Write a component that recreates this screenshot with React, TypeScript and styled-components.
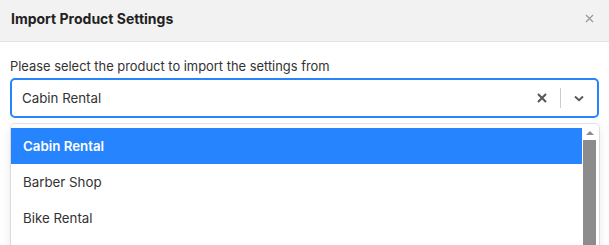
import styled, { createGlobalStyle } from 'styled-components';

const GlobalStyle = createGlobalStyle`
  html, body {
    margin: 0;
    padding: 0;
    background: #fff;
    font-family: Inter, 'Noto Sans', sans-serif;
    color: #333;
  }
`;

const products = ['Cabin Rental', 'Barber Shop', 'Bike Rental'];

const App = () => {
  const selected = 'Cabin Rental';

  return (
    <Modal_wrapper>
      <GlobalStyle />
      <Header>
        <Title>Import Product Settings</Title>
        <CloseButton aria-label='Close'>
          <svg width='9' height='9' viewBox='0 0 9 9'>
            <path d='M1 1L8 8M8 1L1 8' stroke='#9a9a9a' strokeWidth='1.3' />
          </svg>
        </CloseButton>
      </Header>
      <Body>
        <Label>Please select the product to import the settings from</Label>
        <Control>
          <Value>{selected}</Value>
          <Indicators>
            <IconButton>
              <svg width='12' height='12' viewBox='0 0 12 12'>
                <path d='M2 2L10 10M10 2L2 10' stroke='#555' strokeWidth='2' />
              </svg>
            </IconButton>
            <Separator />
            <IconButton>
              <svg width='14' height='14' viewBox='0 0 14 14'>
                <path d='M3 5.5L7 9.2L11 5.5' fill='none' stroke='#555' strokeWidth='1.8' />
              </svg>
            </IconButton>
          </Indicators>
        </Control>
        <Menu>
          <MenuList>
            {products.map((item) => (
              <Option key={item} $active={item === selected}>
                {item}
              </Option>
            ))}
          </MenuList>
          <Scrollbar>
            <ScrollArrow />
            <ScrollThumb />
          </Scrollbar>
        </Menu>
      </Body>
    </Modal_wrapper>
  );
};

const Modal_wrapper = styled.div`
  width: 609px;
  height: 245px;
  overflow: hidden;
`;

const Header = styled.div`
  height: 42px;
  box-sizing: border-box;
  background: #f2f2f2;
  border-bottom: 1px solid #e2e2e2;
  display: flex;
  align-items: center;
  justify-content: space-between;
  padding: 0 15px 0 11px;
`;

const Title = styled.h3`
  margin: 0;
  font-size: 14px;
  font-weight: 700;
  color: #222;
  padding-bottom: 4px;
`;

const CloseButton = styled.span`
  display: flex;
  padding-bottom: 4px;
`;

const Body = styled.div`
  padding: 17px 10px 0;
`;

const Label = styled.div`
  font-size: 12.9px;
  line-height: 16px;
  color: #333;
  margin-bottom: 3px;
`;

const Control = styled.div`
  height: 40px;
  box-sizing: border-box;
  border: 2px solid #2684ff;
  border-radius: 5px;
  display: flex;
  align-items: center;
  padding-left: 10px;
`;

const Value = styled.div`
  flex: 1;
  font-size: 13.3px;
  color: #333;
`;

const Indicators = styled.div`
  display: flex;
  align-items: center;
  height: 100%;
`;

const IconButton = styled.div`
  width: 36px;
  display: flex;
  justify-content: center;
  align-items: center;
`;

const Separator = styled.span`
  width: 1px;
  height: 20px;
  background: #ccc;
`;

const Menu = styled.div`
  margin-top: 6px;
  margin-left: 1px;
  height: 140px;
  border-radius: 4px;
  box-shadow: 0 0 0 1px rgba(0, 0, 0, 0.1), 0 4px 11px rgba(0, 0, 0, 0.1);
  display: flex;
  padding: 4px 2px 0 0;
  box-sizing: border-box;
  overflow: hidden;
`;

const MenuList = styled.div`
  flex: 1;
`;

const Option = styled.div<{ $active?: boolean }>`
  height: 36px;
  display: flex;
  align-items: center;
  padding: 0 12px;
  font-size: 13.3px;
  background: ${(p) => (p.$active ? '#2684ff' : '#fff')};
  color: ${(p) => (p.$active ? '#fff' : '#333')};
  font-weight: ${(p) => (p.$active ? 600 : 400)};
`;

const Scrollbar = styled.div`
  width: 15px;
  display: flex;
  flex-direction: column;
  align-items: center;
`;

const ScrollArrow = styled.div`
  width: 0;
  height: 0;
  margin: 3px 0 5px;
  border-left: 4px solid transparent;
  border-right: 4px solid transparent;
  border-bottom: 4px solid #8c8c8c;
`;

const ScrollThumb = styled.div`
  width: 13px;
  flex: 1;
  background: #8c8c8c;
`;

export default App;
